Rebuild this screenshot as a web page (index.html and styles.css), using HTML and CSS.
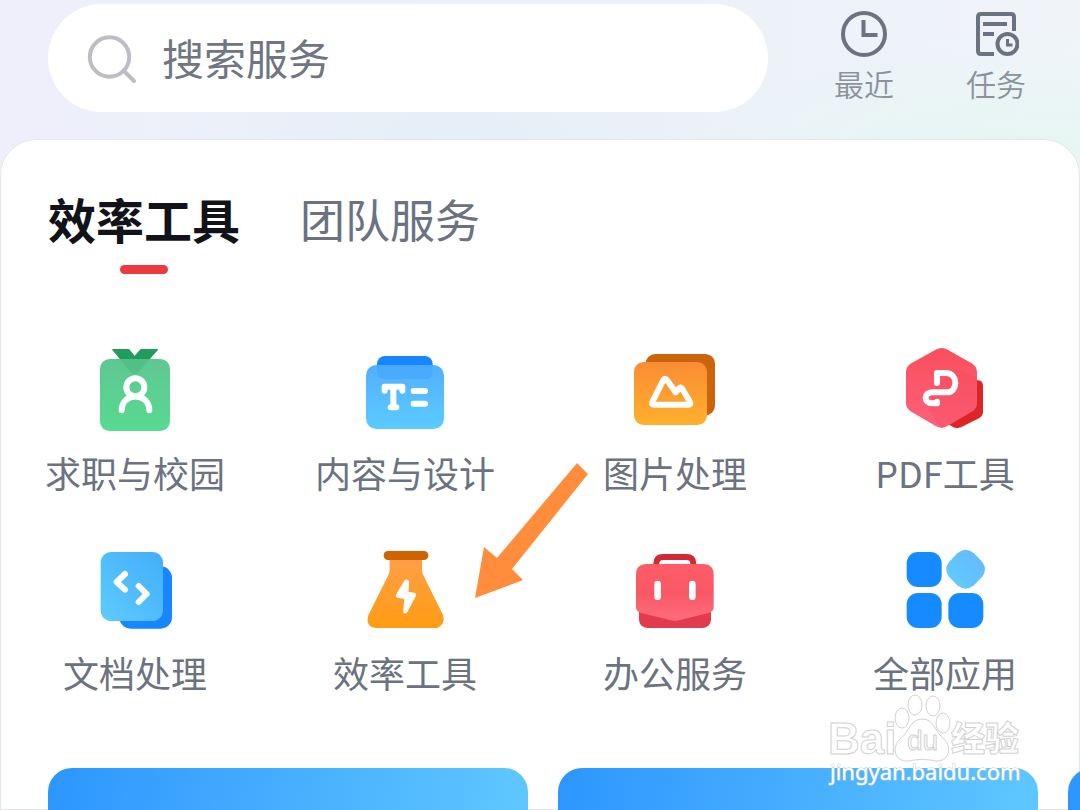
FILE: index.html
```html
<!DOCTYPE html>
<html lang="zh-CN">
<head>
<meta charset="utf-8">
<meta name="viewport" content="width=device-width, initial-scale=1">
<title>服务</title>
<link rel="stylesheet" href="styles.css">
</head>
<body>
<div class="page">
  <header class="topbar">
    <label class="search">
      <svg class="search-icon" viewBox="0 0 50 50" aria-hidden="true"><circle cx="23.500" cy="24" r="19.700"/><path d="M38 38l10 10"/></svg>
      <input class="search-input" type="search" placeholder="搜索服务" aria-label="搜索服务">
    </label>
    <nav class="actions">
      <button class="action" type="button">
        <svg class="action-icon" viewBox="0 0 46 46" aria-hidden="true"><circle cx="23" cy="23" r="21"/><path d="M22.500 9v15h14"/></svg>
        <span>最近</span>
      </button>
      <button class="action" type="button">
        <svg class="action-icon" viewBox="0 0 46 46" aria-hidden="true"><path d="M21 43H8q-3 0-3-3V6q0-3 3-3h30q3 0 3 3v14M10 13h24M10 23h11"/><circle cx="34.500" cy="33" r="10"/><path class="thin" d="M34.500 28v6h5"/></svg>
        <span>任务</span>
      </button>
    </nav>
  </header>

  <main class="panel">
    <div class="tabs" role="tablist">
      <button class="tab tab-active" type="button" role="tab" aria-selected="true">效率工具</button>
      <button class="tab" type="button" role="tab" aria-selected="false">团队服务</button>
    </div>

    <div class="grid">
      <a class="tile" href="#career">
        <svg class="tile-icon" viewBox="0 15 330 330" aria-hidden="true">
          <defs>
            <linearGradient id="green" x2="0" y2="1"><stop stop-color="#5fc792"/><stop offset="1" stop-color="#58da91"/></linearGradient>
            <linearGradient id="sky" x2="0" y2="1"><stop stop-color="#52b0fc"/><stop offset="1" stop-color="#5bcbff"/></linearGradient>
            <linearGradient id="orange" x2="0" y2="1"><stop stop-color="#fb8c35"/><stop offset="1" stop-color="#ffb02b"/></linearGradient>
            <linearGradient id="red" x2="0" y2="1"><stop stop-color="#f94f5c"/><stop offset="1" stop-color="#ff607d"/></linearGradient>
            <linearGradient id="doc" x1="1" x2="0" y2="1"><stop stop-color="#42aefa"/><stop offset="1" stop-color="#5ecbff"/></linearGradient>
            <linearGradient id="flask" x2="0" y2="1"><stop stop-color="#ff9e49"/><stop offset="1" stop-color="#ff9d13"/></linearGradient>
            <linearGradient id="case" x2="0" y2="1"><stop stop-color="#ff5c68"/><stop offset=".5" stop-color="#f95866"/><stop offset="1" stop-color="#ff6c7c"/></linearGradient>
            <linearGradient id="gem" x1="1" x2="0" y2="1"><stop stop-color="#68b5fc"/><stop offset="1" stop-color="#5ed0ff"/></linearGradient>
          </defs>
          <path fill="#229c5c" d="M98 57h49l17 20 18-20h50q4 0 1 4l-26 29h-85L97 60q-2-3 1-3z"/>
          <rect x="60" y="87" width="210" height="216" rx="29" fill="url(#green)"/>
          <path fill="#44b77b" opacity=".5" d="M119 87h91l-35 40q-11 9-22 0z"/>
          <g class="stroke"><circle cx="166" cy="172" r="27"/><path d="M125 241c0-55 83-55 83 0"/></g>
        </svg>
        <span>求职与校园</span>
      </a>
      <a class="tile" href="#content">
        <svg class="tile-icon" viewBox="0 15 330 330" aria-hidden="true">
          <rect x="81" y="78" width="167" height="80" rx="24" fill="#1687ff"/>
          <rect x="48" y="105" width="234" height="192" rx="31" fill="url(#sky)"/>
          <path fill="#3c9dff" opacity=".4" d="M81 105h167v20q0 22-22 22H103q-22 0-22-22z"/>
          <path class="stroke" d="M104 182v-12h53v12M130 171v61M122 232h17"/>
          <path class="stroke" d="M191 183h34M191 221h34"/>
        </svg>
        <span>内容与设计</span>
      </a>
      <a class="tile" href="#image">
        <svg class="tile-icon" viewBox="0 15 330 330" aria-hidden="true">
          <rect x="77" y="72" width="208" height="184" rx="29" fill="#cc640b"/>
          <rect x="42" y="96" width="219" height="189" rx="29" fill="url(#orange)"/>
          <path class="stroke" d="M97 216l33-66q5-8 11 0l26 37 10-12q4-5 9 0l24 41q4 8-4 8H101q-7 0-4-8z"/>
        </svg>
        <span>图片处理</span>
      </a>
      <a class="tile" href="#pdf">
        <svg class="tile-icon" viewBox="0 15 330 330" aria-hidden="true">
          <path fill="#dd2528" d="M240 151h25q14 2 14 17v78q0 11-11 18l-55 28q-13 5-23 0l-18-12z"/>
          <path fill="url(#red)" d="M137 59q18-10 36 0l72 41q16 9 16 27v91q0 18-16 27l-73 43q-17 10-35 0l-73-43q-16-9-16-27v-91q0-18 16-27z"/>
          <path fill="#f34452" opacity=".25" d="M261 145l-46-21q-16-7-29 4l-50 35q-13 9-13 26v61l31 45 18-7 73-43q16-9 16-27z"/>
          <path class="stroke" d="M141 159v-30h26c38 0 38 58 4 58h-44c-27 0-27 33 0 33h14v-5"/>
        </svg>
        <span>PDF工具</span>
      </a>
      <a class="tile" href="#document">
        <svg class="tile-icon" viewBox="0 0 330 330" aria-hidden="true">
          <rect x="118" y="94" width="158" height="187" rx="34" fill="#1787ff"/>
          <rect x="62" y="51" width="187" height="207" rx="32" fill="url(#doc)"/>
          <path class="stroke" d="M135 117l-25 24 25 23M176 153l24 24-24 24"/>
        </svg>
        <span>文档处理</span>
      </a>
      <a class="tile" href="#efficiency">
        <svg class="tile-icon" viewBox="0 0 330 330" aria-hidden="true">
          <path fill="url(#flask)" d="M119 65h97v39q0 10 5 18l58 118q9 27-18 39H77q-32-4-22-38l59-119q5-9 5-18z"/>
          <rect x="101" y="48" width="134" height="27" rx="13" fill="#ce6400"/>
          <path class="bolt" d="M169 140l-25 42 26 4-4 43 26-49-23-4 2-35z"/>
        </svg>
        <span>效率工具</span>
      </a>
      <a class="tile" href="#office">
        <svg class="tile-icon" viewBox="0 0 330 330" aria-hidden="true">
          <path fill="none" stroke="#d22a34" stroke-width="18" d="M109 100V86q0-20 20-20h71q20 0 20 20v14"/>
          <rect x="57" y="170" width="216" height="109" rx="25" fill="#e23b4d"/>
          <path fill="url(#case)" d="M81 87h168q32 0 32 32v98q0 11-12 16l-92 23q-12 3-24 0l-92-23q-13-4-13-16v-98q0-32 33-32z"/>
          <path class="stroke lock" d="M113 147v38M217 147v38"/>
        </svg>
        <span>办公服务</span>
      </a>
      <a class="tile" href="#all">
        <svg class="tile-icon" viewBox="0 0 330 330" aria-hidden="true">
          <g fill="#168aff"><rect x="50" y="51" width="105" height="105" rx="34"/><rect x="50" y="174" width="105" height="105" rx="34"/><rect x="175" y="174" width="105" height="105" rx="34"/></g>
          <path fill="url(#gem)" d="M202 55q25-21 50 0l25 26q16 22 0 44l-25 26q-25 20-50 0l-25-26q-17-22 0-44z"/>
        </svg>
        <span>全部应用</span>
      </a>
    </div>

    <div class="promos">
      <div class="promo"></div>
      <div class="promo"></div>
      <div class="promo"></div>
    </div>
  </main>

  <svg class="pointer" viewBox="0 0 120 140" aria-hidden="true"><path d="M107 3l11 11-76 95 11 11L5 138l9-51 13 11z"/></svg>

  <svg class="watermark" viewBox="0 0 200 96" role="img" aria-label="Baidu 经验 jingyan.baidu.com">
    <g class="mark">
      <text class="brand" x="0" y="60">Bai</text>
      <ellipse cx="74" cy="24" rx="7" ry="10"/><ellipse cx="87" cy="11" rx="7" ry="10"/><ellipse cx="105" cy="12" rx="7" ry="10"/><ellipse cx="115" cy="29" rx="7" ry="10"/>
      <path d="M94 25c13 0 13 14 22 20 9 9 4 23-8 22-10-2-17-2-28 0-13 1-17-13-8-22 9-6 10-20 22-20z"/>
      <text class="du" x="79" y="56">du</text>
      <text class="cjk" x="123" y="57">经验</text>
    </g>
    <text class="domain" x="2" y="86">jingyan.baidu.com</text>
  </svg>
</div>
</body>
</html>
```
FILE: styles.css
```css
* {
  box-sizing: border-box;
}

body {
  margin: 0;
  font-family: "Noto Sans CJK SC", sans-serif;
  color: #6b7280;
}

button,
input {
  font: inherit;
  color: inherit;
  border: 0;
  padding: 0;
  background: none;
}

.page {
  position: relative;
  display: flex;
  flex-direction: column;
  height: 100vh;
  overflow: hidden;
  background:
    radial-gradient(ellipse 380px 130px at 94% 160px, #e5f6f2 0, rgba(229, 246, 242, 0) 100%),
    radial-gradient(ellipse 300px 120px at 42% 140px, #e5eff7 0, rgba(229, 239, 247, 0) 100%),
    linear-gradient(90deg, #eeeffa 0%, #ecf1f9 60%, #f0f4f9 100%);
}

.topbar {
  display: flex;
  gap: 30px;
  padding: 4px 18px 27px 48px;
}

.search {
  flex: 1;
  display: flex;
  align-items: center;
  gap: 26px;
  height: 108px;
  padding: 0 38px;
  border-radius: 54px;
  background: #fff;
}

.search-icon {
  flex: none;
  width: 50px;
  height: 50px;
  fill: none;
  stroke: #bcbdc5;
  stroke-width: 4;
  stroke-linecap: round;
}

.search-input {
  flex: 1;
  min-width: 0;
  height: 64px;
  padding-bottom: 4px;
  font-size: 42px;
  outline: 0;
}

.search-input::placeholder {
  color: #6f7682;
  opacity: 1;
}

.actions {
  display: flex;
}

.action {
  display: flex;
  flex-direction: column;
  align-items: center;
  gap: 4px;
  width: 132px;
  padding-top: 7px;
  font-size: 30px;
  line-height: 44px;
  font-weight: 350;
  color: #8b929c;
}

.action-icon {
  width: 46px;
  height: 46px;
  fill: none;
  stroke: #6b7280;
  stroke-width: 4;
}

.thin {
  stroke-width: 3;
}

.panel {
  flex: 1;
  display: flex;
  flex-direction: column;
  min-height: 0;
  border-radius: 36px 36px 0 0;
  background: #fff;
  box-shadow: inset 0 0 0 1px #e3e6ea;
}

.tabs {
  display: flex;
  gap: 60px;
  padding: 50px 48px 0;
}

.tab {
  display: flex;
  flex-direction: column;
  align-items: center;
  height: 86px;
  font-size: 45px;
  line-height: 60px;
}

.tab-active {
  font-size: 48px;
  line-height: 58px;
  font-weight: 700;
  color: #111318;
}

.tab-active::after {
  content: "";
  width: 48px;
  height: 9px;
  margin-top: 18px;
  border-radius: 5px;
  background: #ec3b40;
}

.grid {
  display: grid;
  grid-template-columns: repeat(4, 1fr);
  row-gap: 36px;
  padding-top: 60px;
}

.tile {
  display: flex;
  flex-direction: column;
  align-items: center;
  font-size: 36px;
  line-height: 54px;
  color: inherit;
  text-decoration: none;
}

.tile-icon {
  width: 110px;
  height: 110px;
}

.stroke {
  fill: none;
  stroke: #fff;
  stroke-width: 18;
  stroke-linecap: round;
  stroke-linejoin: round;
}

.lock {
  stroke-width: 20;
}

.bolt {
  fill: #fff;
  stroke: #fff;
  stroke-width: 13;
  stroke-linejoin: round;
}

.promos {
  flex: 1;
  display: flex;
  gap: 30px;
  min-height: 0;
  margin-top: 69px;
  padding-left: 48px;
  overflow: hidden;
}

.promo {
  flex: none;
  width: 480px;
  height: 200px;
  border-radius: 24px;
  background: linear-gradient(100deg, #2d96ff, #62caff);
}

.pointer {
  position: absolute;
  left: 470px;
  top: 460px;
  width: 120px;
  height: 140px;
  fill: #ff8d3b;
}

.watermark {
  position: absolute;
  right: 52px;
  top: 694px;
  width: 200px;
  height: 96px;
  overflow: visible;
}

.mark {
  fill: #fff;
  stroke: #d2d2d2;
  stroke-width: 1;
}

.brand {
  font: 700 44px "Liberation Sans", sans-serif;
}

.du {
  font: 400 28px "Liberation Sans", sans-serif;
}

.cjk {
  font: 900 34px "Noto Sans CJK SC", sans-serif;
}

.domain {
  font: 400 22px "Noto Sans", sans-serif;
  fill: #fff;
  stroke: #c4ccd3;
  stroke-width: 1;
  paint-order: stroke;
}
```
